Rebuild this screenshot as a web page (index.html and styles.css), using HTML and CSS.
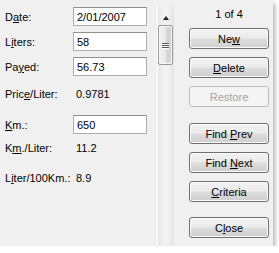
FILE: index.html
```html
<!DOCTYPE html>
<html lang="en">

<head>
    <meta charset="UTF-8">
    <title>Fuel log</title>
    <link rel="stylesheet" href="styles.css">
</head>

<body>
    <div class="window">
        <div class="form">
            <div class="row r-date">
                <label>D<u>a</u>te:</label>
                <input class="field" type="text" value="2/01/2007">
            </div>
            <div class="row r-liters">
                <label>L<u>i</u>ters:</label>
                <input class="field" type="text" value="58">
            </div>
            <div class="row r-payed">
                <label>Pa<u>y</u>ed:</label>
                <input class="field" type="text" value="56.73">
            </div>
            <div class="row r-price">
                <label>Pric<u>e</u>/Liter:</label>
                <span class="value">0.9781</span>
            </div>
            <div class="row r-km">
                <label><u>K</u>m.:</label>
                <input class="field" type="text" value="650">
            </div>
            <div class="row r-kml">
                <label>K<u>m</u>./Liter:</label>
                <span class="value">11.2</span>
            </div>
            <div class="row r-l100">
                <label>L<u>i</u>ter/100Km.:</label>
                <span class="value">8.9</span>
            </div>
        </div>

        <div class="scrollbar">
            <div class="sb-up"><span class="arrow"></span></div>
            <div class="sb-thumb">
                <span class="grip"></span>
                <span class="grip"></span>
                <span class="grip"></span>
            </div>
        </div>

        <div class="actions">
            <div class="counter">1 of 4</div>
            <button class="btn">Ne<u>w</u></button>
            <button class="btn"><u>D</u>elete</button>
            <button class="btn" disabled>Restore</button>
            <button class="btn gap">Find <u>P</u>rev</button>
            <button class="btn">Find <u>N</u>ext</button>
            <button class="btn"><u>C</u>riteria</button>
            <button class="btn gap last">C<u>l</u>ose</button>
        </div>
    </div>
</body>

</html>
```

FILE: styles.css
```css
* {
    padding: 0;
    margin: 0;
    box-sizing: border-box;
}

body {
    background: #fff;
    font-family: "Liberation Sans", Arial, sans-serif;
    font-size: 11px;
    color: #000;
}

.window {
    width: 273px;
    height: 246px;
    background: #f0f0f0;
    display: flex;
    box-shadow: 2px 3px 5px rgba(0, 0, 0, 0.3);
}

/* left: form fields */
.form {
    width: 157px;
    padding: 7px 0 0 5px;
    display: flex;
    flex-direction: column;
}

.row {
    display: flex;
    align-items: center;
    height: 19px;
}

.row label {
    width: 68px;
}

.r-liters,
.r-payed {
    margin-top: 6px;
}

.r-price {
    margin-top: 8px;
}

.r-km {
    margin-top: 12px;
}

.r-kml {
    margin-top: 4px;
}

.r-l100 {
    margin-top: 11px;
}

.field {
    width: 74px;
    height: 19px;
    border: 1px solid #abadb3;
    border-top-color: #8e8f8f;
    background: #fff;
    font: inherit;
    padding: 0 3px;
    color: #000;
    outline: none;
}

.value {
    padding-left: 3px;
}

/* scrollbar */
.scrollbar {
    width: 17px;
    margin-top: 7px;
    border-left: 1px solid #fff;
    background: linear-gradient(to right, #e6e6e6, #efefef 25%, #f3f3f3 60%, #e4e4e4);
}

.sb-up {
    height: 18px;
    display: flex;
    justify-content: center;
    align-items: flex-end;
    padding-bottom: 5px;
}

.arrow {
    width: 0;
    height: 0;
    border-left: 3px solid transparent;
    border-right: 3px solid transparent;
    border-bottom: 4px solid #222;
}

.sb-thumb {
    width: 15px;
    height: 40px;
    border: 1px solid #979797;
    border-radius: 2px;
    background: linear-gradient(to right, #f4f4f4, #e8e8e8 50%, #d9d9d9 51%, #d0d0d0);
    box-shadow: inset 0 0 0 1px #f8f8f8;
    display: flex;
    flex-direction: column;
    align-items: center;
    justify-content: center;
    gap: 1px;
}

.grip {
    width: 7px;
    height: 1px;
    background: #555;
    box-shadow: 0 1px 0 #fff;
}

/* right: record buttons */
.actions {
    flex: 1;
    padding: 0 4px 0 15px;
    display: flex;
    flex-direction: column;
}

.counter {
    height: 28px;
    line-height: 28px;
    text-align: center;
}

.btn {
    width: 80px;
    height: 21px;
    margin-bottom: 8px;
    border: 1px solid #707070;
    border-radius: 3px;
    background: linear-gradient(#f2f2f2, #ebebeb 48%, #dddddd 52%, #cfcfcf);
    box-shadow: inset 0 0 0 1px #fbfbfb;
    font: inherit;
    color: #000;
    text-align: center;
}

.btn:disabled {
    border-color: #b9bdc0;
    background: #f4f4f4;
    box-shadow: none;
    color: #a3a3a3;
}

.btn.gap {
    margin-top: 8px;
}

.btn.last {
    margin-top: 7px;
}
```
